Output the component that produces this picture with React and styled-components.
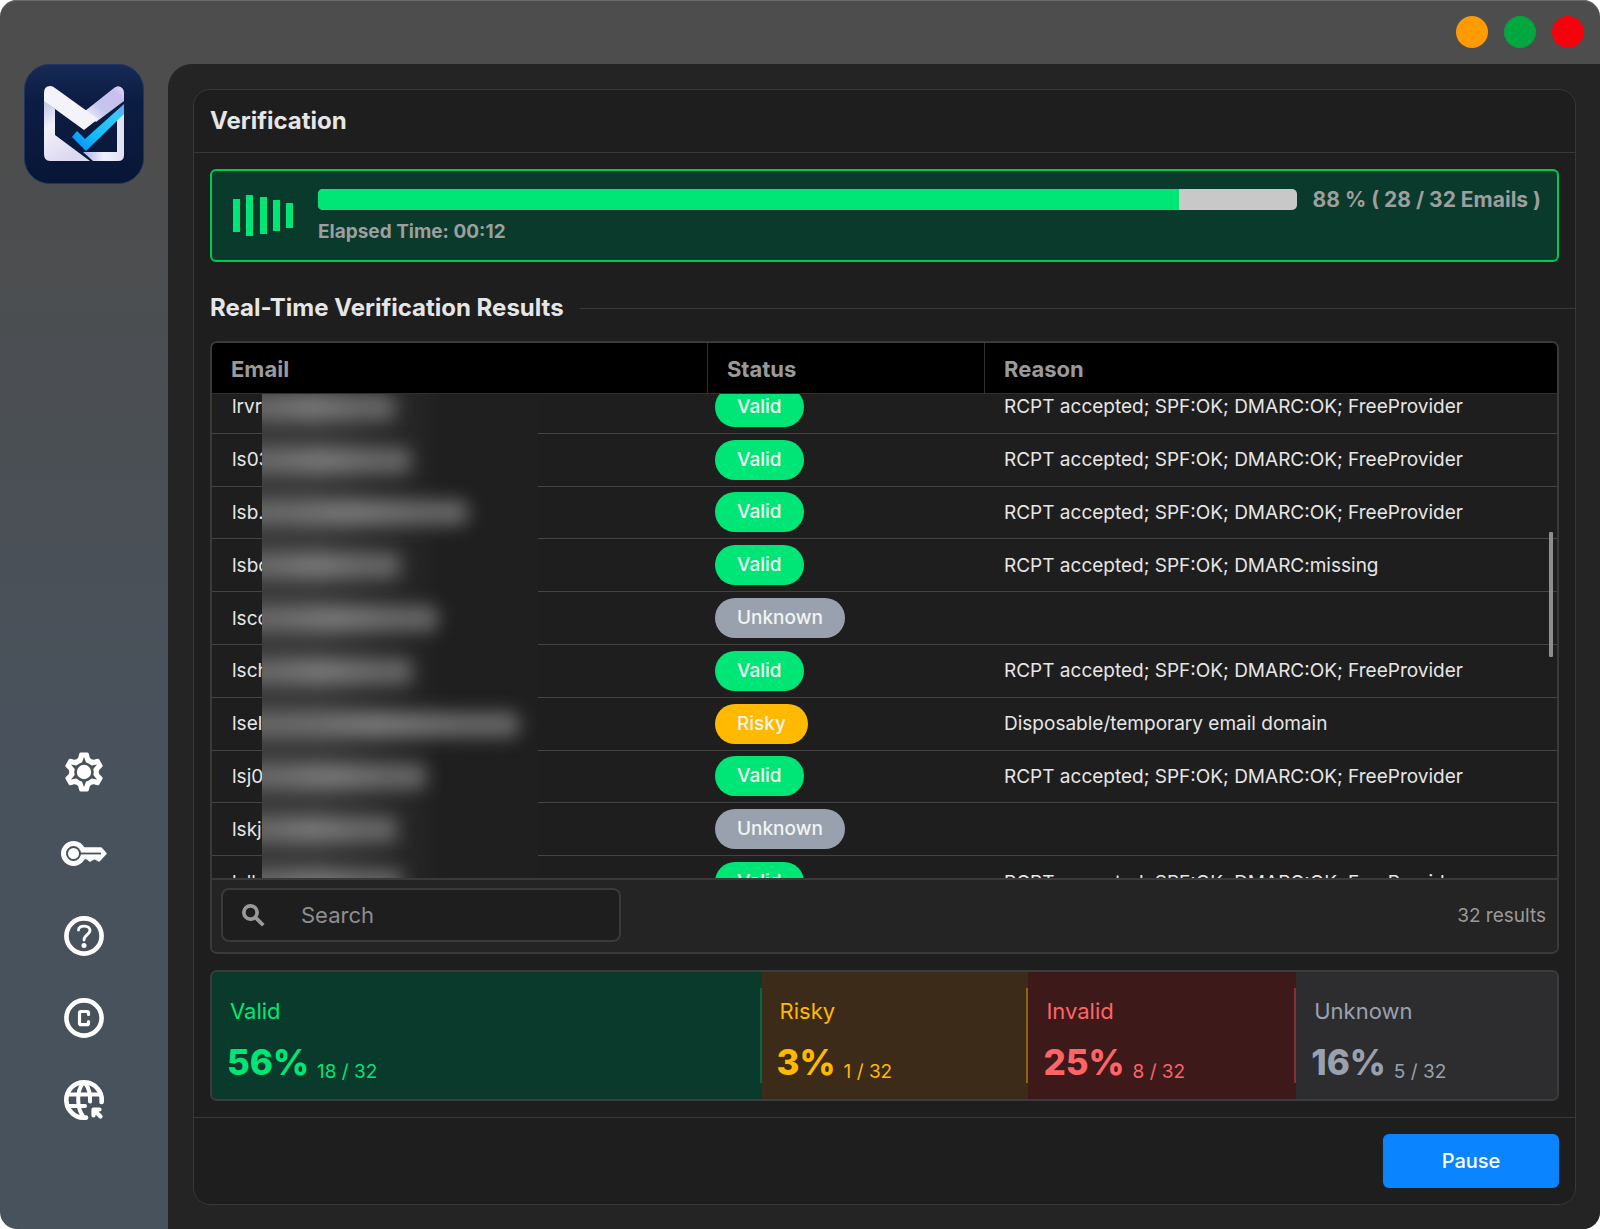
import { useLayoutEffect, useRef, useState } from "react";
import styled, { createGlobalStyle } from "styled-components";
import { MdSearch } from "react-icons/md";

const GlobalStyle = createGlobalStyle`
  * {
    box-sizing: border-box;
  }

  body {
    margin: 0;
    background: #ffffff;
    font-family: Inter, "Liberation Sans", sans-serif;
    color: #e6e6e6;
  }

  button,
  input {
    font-family: inherit;
  }
`;

const Window = styled.div`
  display: flex;
  flex-direction: column;
  height: 100vh;
  min-height: 900px;
  border-radius: 17px;
  overflow: hidden;
  background: linear-gradient(180deg, #4d4d4d 12%, #48525d 64%);
  box-shadow: inset 0 1px 0 #6c6e6e;
`;

const TitleBar = styled.header`
  display: flex;
  justify-content: flex-end;
  gap: 16px;
  padding: 16px;
`;

const WindowButton = styled.button`
  width: 32px;
  height: 32px;
  padding: 0;
  border: none;
  border-radius: 50%;
  background: ${props => props.$color};
`;

const Body = styled.div`
  display: flex;
  flex: 1;
  min-height: 0;
`;

const Sidebar = styled.aside`
  display: flex;
  flex-direction: column;
  justify-content: space-between;
  align-items: center;
  width: 168px;
  padding-bottom: 104px;
`;

const Nav = styled.nav`
  display: flex;
  flex-direction: column;
  gap: 32px;
`;

const NavButton = styled.button`
  display: flex;
  align-items: center;
  justify-content: center;
  width: 50px;
  height: 50px;
  padding: 0;
  border: none;
  background: none;
  color: #ffffff;
`;

const Main = styled.main`
  display: flex;
  flex: 1;
  min-width: 0;
  padding: 25px 24px 24px 25px;
  border-top-left-radius: 24px;
  background: #242424;
`;

const Card = styled.section`
  display: flex;
  flex: 1;
  flex-direction: column;
  min-width: 0;
  border: 1px solid #383838;
  border-radius: 17px;
  background: #1e1e1e;
`;

const CardHeader = styled.div`
  padding: 15px 16px 16px;
  border-bottom: 1px solid #383838;
`;

const Title = styled.h1`
  margin: 0;
  font-size: 24px;
  line-height: 31px;
  font-weight: 700;
`;

const CardContent = styled.div`
  display: flex;
  flex: 1;
  flex-direction: column;
  min-height: 0;
  padding: 16px;
`;

const CardFooter = styled.div`
  display: flex;
  justify-content: flex-end;
  padding: 16px;
  border-top: 1px solid #383838;
`;

const PauseButton = styled.button`
  width: 176px;
  height: 54px;
  border: none;
  border-radius: 6px;
  background: #0a84ff;
  color: #ffffff;
  font-size: 20px;
  font-weight: 500;
`;

const ProgressBox = styled.div`
  display: flex;
  align-items: flex-start;
  gap: 16px;
  padding: 18px 16px 16px 21px;
  border: 2px solid #00c950;
  border-radius: 6px;
  background: #0a3a2c;
  color: #9d9f9e;
  font-weight: 700;
`;

const Meter = styled.div`
  flex: 1;
  margin-left: 7px;
`;

const Progress = styled.progress`
  display: block;
  width: 100%;
  height: 21px;
  border: none;
  border-radius: 5px;
  overflow: hidden;
  appearance: none;

  &::-webkit-progress-bar {
    background: #c8c8c8;
  }

  &::-webkit-progress-value {
    background: #00e676;
  }
`;

const Elapsed = styled.label`
  display: block;
  margin-top: 10px;
  font-size: 19px;
  line-height: 24px;
`;

const Amount = styled.div`
  font-size: 21px;
  line-height: 21px;
`;

const SectionTitle = styled.h2`
  display: flex;
  align-items: center;
  gap: 16px;
  margin: 31px -16px 18px 0;
  font-size: 24px;
  line-height: 30px;
  font-weight: 700;

  &::after {
    content: "";
    flex: 1;
    height: 1px;
    background: #383838;
  }
`;

const Results = styled.div`
  display: flex;
  flex: 1;
  flex-direction: column;
  position: relative;
  min-height: 0;
  border: 2px solid #3a3a3b;
  border-radius: 7px;
  overflow: hidden;
`;

const Scroller = styled.div`
  position: relative;
  flex: 1;
  min-height: 0;
  overflow-y: auto;
  scrollbar-width: none;
`;

const Table = styled.table`
  width: 100%;
  height: 579px;
  table-layout: fixed;
  border-collapse: separate;
  border-spacing: 0;
  font-size: 19px;
`;

const HeadCell = styled.th`
  position: sticky;
  top: 0;
  z-index: 2;
  width: ${props => props.$width};
  height: 51px;
  padding: 2px 19px 0;
  border-bottom: 1px solid #303030;
  background: #000000;
  color: #9a9a9a;
  font-size: 22px;
  font-weight: 700;
  text-align: left;

  & + & {
    border-left: 1px solid #303030;
  }
`;

const Cell = styled.td`
  padding: ${props => (props.$badge ? "0 8px" : "0 20px")};
  border-bottom: 1px solid #444444;
  white-space: nowrap;
`;

const statusColors = {
  Valid: "#00e676",
  Risky: "#ffb900",
  Unknown: "#99a1af"
};

const Badge = styled.span`
  display: inline-block;
  padding: 0 22px;
  border-radius: 20px;
  background: ${props => statusColors[props.$status]};
  color: #f2f4f3;
  line-height: 40px;
  font-weight: 500;
  vertical-align: middle;
`;

const Redaction = styled.div`
  position: absolute;
  top: 51px;
  left: 50px;
  z-index: 1;
  width: 276px;
  height: 528px;
  display: grid;
  grid-auto-rows: 1fr;
  align-items: center;
  overflow: hidden;
  background: linear-gradient(90deg, #393939 20%, #1f1f1f 66%);
`;

const Smear = styled.div`
  height: 25px;
  margin-left: -30px;
  border-radius: 8px;
  background: linear-gradient(90deg, #6a6a6a 20%, #7a7a7a 50%, #686868 80%);
  filter: blur(9px);
`;

const ScrollThumb = styled.div`
  position: absolute;
  top: 189px;
  right: 4px;
  z-index: 3;
  width: 4px;
  height: 125px;
  border-radius: 1px;
  background: #8e8e8e;
`;

const ResultsFooter = styled.div`
  display: flex;
  align-items: center;
  justify-content: space-between;
  padding: 8px 11px 10px 9px;
  border-top: 2px solid #3a3a3b;
  background: #242424;
  color: #9a9a9a;
  font-size: 19px;
`;

const SearchBox = styled.label`
  display: flex;
  align-items: center;
  width: 400px;
  height: 54px;
  padding: 0 16px;
  gap: 33px;
  border: 2px solid #3a3a3b;
  border-radius: 8px;
  background: #1e1e1e;
`;

const SearchIcon = styled(MdSearch)`
  flex: none;

  path:last-child {
    stroke: currentColor;
    stroke-width: 1;
  }
`;

const SearchInput = styled.input`
  flex: 1;
  min-width: 0;
  padding: 0;
  border: none;
  outline: none;
  background: none;
  color: #e6e6e6;
  font-size: 22px;

  &::placeholder {
    color: #8e8e8e;
  }
`;

const Stats = styled.div`
  display: grid;
  grid-template-columns: 550fr 267fr 268fr 261fr;
  margin-top: 16px;
  border: 2px solid #3a3c3e;
  border-radius: 7px;
  overflow: hidden;
`;

const Stat = styled.div`
  display: flex;
  padding: 16px 0;
  background: ${props => props.$background};
  color: ${props => props.$color};
`;

const StatInner = styled.div`
  flex: 1;
  height: 95px;
  padding: 8px 15px 0;
  border-right: 2px solid ${props => props.$line};
`;

const StatLabel = styled.div`
  padding-left: 3px;
  font-size: 22px;
  line-height: 30px;
`;

const StatValue = styled.div`
  display: flex;
  align-items: flex-end;
  gap: 8px;
  margin-top: 14px;
  font-size: 19px;
  line-height: 24px;
`;

const Percent = styled.strong`
  font-size: 35px;
  line-height: 44px;
  font-weight: 800;
`;

const Logo = () => (
  <svg width="120" height="120" viewBox="0 0 120 120" role="img" aria-label="Home">
    <defs>
      <linearGradient id="navy" x1="0" y1="0" x2="0" y2="1">
        <stop offset="0" stopColor="#162a55" />
        <stop offset="0.3" stopColor="#0c1d44" />
        <stop offset="1" stopColor="#081636" />
      </linearGradient>
      <linearGradient id="side" x1="0" y1="0" x2="0.5" y2="1">
        <stop offset="0" stopColor="#bcc2e8" />
        <stop offset="0.4" stopColor="#f2f1fb" />
        <stop offset="1" stopColor="#dcd8f0" />
      </linearGradient>
      <linearGradient id="arm" x1="0" y1="1" x2="1" y2="0">
        <stop offset="0" stopColor="#fbfbff" />
        <stop offset="0.4" stopColor="#c3c6ee" />
        <stop offset="0.8" stopColor="#c9bfee" />
        <stop offset="1" stopColor="#e6dcfa" />
      </linearGradient>
      <linearGradient id="corner" x1="0" y1="0" x2="1" y2="0">
        <stop offset="0" stopColor="#a9b4e6" />
        <stop offset="0.5" stopColor="#f0f0fc" />
        <stop offset="1" stopColor="#dfe0f6" />
      </linearGradient>
      <linearGradient id="tick" x1="0" y1="1" x2="1" y2="0">
        <stop offset="0" stopColor="#0a86f2" />
        <stop offset="0.4" stopColor="#12bdfb" />
        <stop offset="0.8" stopColor="#35c9fa" />
        <stop offset="1" stopColor="#7b9df0" />
      </linearGradient>
    </defs>
    <rect x="0.5" y="0.5" width="119" height="119" rx="25" fill="url(#navy)" stroke="#1f3460" />
    <path d="M20 36L31 45V71L66 97H26Q20 97 20 90Z" fill="url(#side)" />
    <path d="M59 88H93V50L100 41V91Q100 97 94 97H69Z" fill="url(#corner)" />
    <path d="M61 47L90 24Q95 20 99 25Q100 27 100 29V37L72 58Z" fill="url(#arm)" />
    <path d="M20 29Q20 22 26 22Q29 22 31 24L74 55L60 66L20 37Z" fill="#f4f3fc" />
    <path d="M48 73L53 67L61 75L100 40V50L62 87Z" fill="url(#tick)" />
  </svg>
);

const polar = (radius, degrees) => {
  const angle = ((degrees - 90) * Math.PI) / 180;
  return `${20 + radius * Math.cos(angle)},${20 + radius * Math.sin(angle)}`;
};

const teeth = [0, 60, 120, 180, 240, 300];
const gearPoints = teeth
  .map(t => [polar(14, t - 18), polar(18, t - 10), polar(18, t + 10), polar(14, t + 18), polar(13, t + 30)].join(" "))
  .join(" ");
const starPoints = teeth
  .map(t => [polar(9, t - 15), polar(15, t), polar(9, t + 15)].join(" "))
  .join(" ");

const GearIcon = () => (
  <svg width="40" height="40" viewBox="0 0 40 40" fill="currentColor">
    <mask id="gear">
      <rect width="40" height="40" fill="#fff" />
      <circle cx="20" cy="20" r="9.8" fill="#000" />
      <polygon points={starPoints} fill="#000" />
      <circle cx="20" cy="20" r="7.2" fill="#fff" />
    </mask>
    <polygon points={gearPoints} stroke="currentColor" strokeWidth="3.4" strokeLinejoin="round" mask="url(#gear)" />
  </svg>
);

const KeyIcon = () => (
  <svg width="46" height="26" viewBox="0 0 46 26" fill="currentColor">
    <mask id="key">
      <rect width="46" height="26" fill="#fff" />
      <circle cx="12.5" cy="12.5" r="6.5" fill="none" stroke="#000" strokeWidth="2" />
      <path d="M19 12.5H40" stroke="#000" strokeWidth="1.8" />
    </mask>
    <g mask="url(#key)">
      <circle cx="12.5" cy="12.5" r="12.5" />
      <path
        d="M22 7.5H40L44.5 12.5L38 19.5L33.5 17L29 19.5L26 17H22Z"
        stroke="currentColor"
        strokeWidth="2.4"
        strokeLinejoin="round"
      />
    </g>
  </svg>
);

const HelpIcon = () => (
  <svg width="40" height="40" viewBox="0 0 40 40" fill="none" stroke="currentColor">
    <circle cx="20" cy="20" r="17.6" strokeWidth="4.6" />
    <path d="M14.5 14C14.5 8.7 26 8.7 26 14.5C26 18.5 20 19 20 24" strokeWidth="2.9" strokeLinecap="round" />
    <circle cx="20" cy="29.5" r="2.5" fill="currentColor" stroke="none" />
  </svg>
);

const CopyrightIcon = () => (
  <svg width="40" height="40" viewBox="0 0 40 40" fill="none" stroke="currentColor">
    <circle cx="20" cy="20" r="17.6" strokeWidth="4.6" />
    <path
      d="M24.5 16.5V15Q24.5 13.5 23 13.5H17Q15.5 13.5 15.5 15V25.2Q15.5 26.7 17 26.7H23Q24.5 26.7 24.5 25.2V23.7"
      strokeWidth="3.2"
      strokeLinecap="round"
    />
  </svg>
);

const GlobeIcon = () => (
  <svg width="40" height="40" viewBox="0 0 40 40" fill="none" stroke="currentColor" strokeWidth="4.6" strokeLinecap="round">
    <path d="M37.6 22A17.7 17.7 0 1 0 22 37.6" />
    <path d="M3 14.5H37M3 26H21M19 3C12.5 11 12.5 28 19.5 37M21 3C25 8 26.5 14 26 21.5" strokeWidth="4" />
    <path d="M29.5 35.5V29.5H35.5M30 30L36.5 36.5" strokeWidth="4.2" strokeLinejoin="round" />
  </svg>
);

const WaveIcon = () => (
  <svg width="62" height="48" viewBox="0 0 62 48" fill="#00e676" aria-hidden="true">
    <rect x="0" y="10" width="7" height="33" />
    <rect x="13" y="6" width="7" height="41" />
    <rect x="27" y="8" width="7" height="37" />
    <rect x="40" y="11" width="7" height="31" />
    <rect x="53" y="14" width="7" height="25" />
  </svg>
);

const windowButtons = [
  { label: "Minimize", color: "#ff9a00" },
  { label: "Maximize", color: "#00a63e" },
  { label: "Close", color: "#f6000b" }
];

const navItems = [
  { label: "Settings", Icon: GearIcon },
  { label: "License key", Icon: KeyIcon },
  { label: "Help", Icon: HelpIcon },
  { label: "Copyright", Icon: CopyrightIcon },
  { label: "Website", Icon: GlobeIcon }
];

const ACCEPTED = "RCPT accepted; SPF:OK; DMARC:OK; FreeProvider";

// `hidden` is the length in pixels of the blurred part of the address
const rows = [
  { email: "lrvr", hidden: 133, status: "Valid", reason: ACCEPTED },
  { email: "ls03", hidden: 149, status: "Valid", reason: ACCEPTED },
  { email: "lsb.", hidden: 206, status: "Valid", reason: ACCEPTED },
  { email: "lsbo", hidden: 138, status: "Valid", reason: "RCPT accepted; SPF:OK; DMARC:missing" },
  { email: "lsco", hidden: 176, status: "Unknown", reason: "" },
  { email: "lsch", hidden: 150, status: "Valid", reason: ACCEPTED },
  { email: "lsel", hidden: 257, status: "Risky", reason: "Disposable/temporary email domain" },
  { email: "lsj0", hidden: 164, status: "Valid", reason: ACCEPTED },
  { email: "lskj", hidden: 135, status: "Unknown", reason: "" },
  { email: "lslb", hidden: 140, status: "Valid", reason: ACCEPTED }
];

const stats = [
  { label: "Valid", percent: 56, count: 18, color: "#00e676", background: "#0a3a2c", line: "#07663f" },
  { label: "Risky", percent: 3, count: 1, color: "#ffb900", background: "#3c2b19", line: "#8c6310" },
  { label: "Invalid", percent: 25, count: 8, color: "#ff6467", background: "#3e191a", line: "#843133" },
  { label: "Unknown", percent: 16, count: 5, color: "#99a1af", background: "#2d2d2f", line: "transparent" }
];

const ResultsTable = () => {
  const [query, setQuery] = useState("");
  const scroller = useRef(null);

  useLayoutEffect(() => {
    scroller.current.scrollTop = 13;
  }, []);

  return (
    <Results>
      <Scroller ref={scroller}>
        <Table>
          <thead>
            <tr>
              <HeadCell $width="36.8%">Email</HeadCell>
              <HeadCell $width="20.6%">Status</HeadCell>
              <HeadCell $width="auto">Reason</HeadCell>
            </tr>
          </thead>
          <tbody>
            {rows.map(row => (
              <tr key={row.email}>
                <Cell>{row.email}</Cell>
                <Cell $badge>
                  <Badge $status={row.status}>{row.status}</Badge>
                </Cell>
                <Cell>{row.reason}</Cell>
              </tr>
            ))}
          </tbody>
        </Table>
        <Redaction>
          {rows.map(row => (
            <Smear key={row.email} style={{ width: row.hidden + 30 }} />
          ))}
        </Redaction>
      </Scroller>
      <ScrollThumb />
      <ResultsFooter>
        <SearchBox>
          <SearchIcon size={29} />
          <SearchInput
            type="text"
            placeholder="Search"
            aria-label="Search"
            value={query}
            onChange={e => setQuery(e.target.value)}
          />
        </SearchBox>
        <span>32 results</span>
      </ResultsFooter>
    </Results>
  );
};

const App = () => (
  <>
    <GlobalStyle />
    <Window>
      <TitleBar>
        {windowButtons.map(button => (
          <WindowButton key={button.label} $color={button.color} aria-label={button.label} />
        ))}
      </TitleBar>
      <Body>
        <Sidebar>
          <Logo />
          <Nav>
            {navItems.map(({ label, Icon }) => (
              <NavButton key={label} aria-label={label}>
                <Icon />
              </NavButton>
            ))}
          </Nav>
        </Sidebar>
        <Main>
          <Card>
            <CardHeader>
              <Title>Verification</Title>
            </CardHeader>
            <CardContent>
              <ProgressBox>
                <WaveIcon />
                <Meter>
                  <Progress id="progress" value={88} max={100} />
                  <Elapsed htmlFor="progress">Elapsed Time: 00:12</Elapsed>
                </Meter>
                <Amount>88 % ( 28 / 32 Emails )</Amount>
              </ProgressBox>
              <SectionTitle>Real-Time Verification Results</SectionTitle>
              <ResultsTable />
              <Stats>
                {stats.map(stat => (
                  <Stat key={stat.label} $color={stat.color} $background={stat.background}>
                    <StatInner $line={stat.line}>
                      <StatLabel>{stat.label}</StatLabel>
                      <StatValue>
                        <Percent>{stat.percent}%</Percent>
                        <span>{stat.count} / 32</span>
                      </StatValue>
                    </StatInner>
                  </Stat>
                ))}
              </Stats>
            </CardContent>
            <CardFooter>
              <PauseButton>Pause</PauseButton>
            </CardFooter>
          </Card>
        </Main>
      </Body>
    </Window>
  </>
);

export default App;
